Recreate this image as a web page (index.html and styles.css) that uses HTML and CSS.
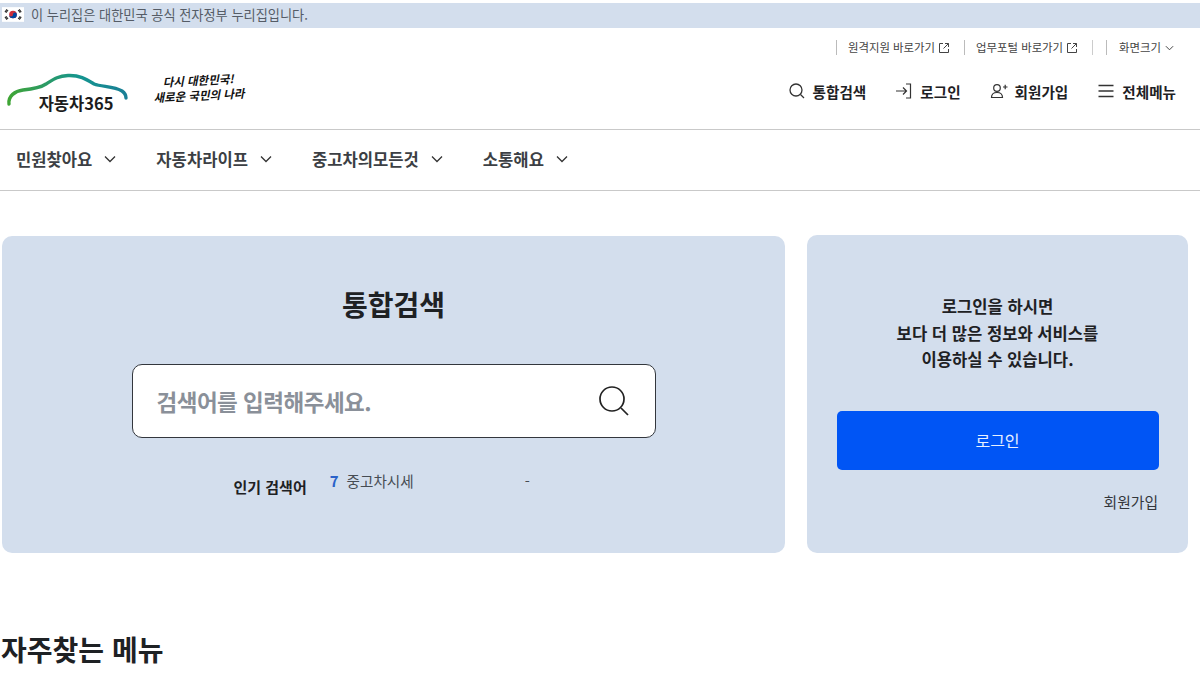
FILE: index.html
```html
<!DOCTYPE html>
<html lang="ko">
<head>
<meta charset="utf-8">
<title>자동차365</title>
<link rel="stylesheet" href="styles.css">
</head>
<body>
<div class="gov-banner">
  <svg class="flag" viewBox="0 0 24 16" width="22" height="15" aria-hidden="true">
    <rect width="24" height="16" fill="#fff"/>
    <circle cx="12" cy="8" r="4.2" fill="#cd2e3a"/>
    <path d="M7.8 8a4.2 4.2 0 0 0 8.4 0a2.1 2.1 0 0 0-4.2 0a2.1 2.1 0 0 1-4.2 0z" fill="#0047a0"/>
    <g stroke="#222" stroke-width="1.1">
      <path d="M3.2 5.4l2.2-3M4.4 6.1l2.2-3"/>
      <path d="M17.6 3.1l2.2 3M18.8 2.4l2.2 3"/>
      <path d="M3.2 10.6l2.2 3M4.4 9.9l2.2 3"/>
      <path d="M17.6 12.9l2.2-3M18.8 13.6l2.2-3"/>
    </g>
  </svg>
  <span>이 누리집은 대한민국 공식 전자정부 누리집입니다.</span>
</div>

<header class="site-header">
  <div class="util-row">
    <a class="util-link">원격지원 바로가기
      <svg class="ext" viewBox="0 0 12 12" width="12" height="12"><path d="M5 1.500H1.500v9h9V7M7 1.500h3.500V5M10.500 1.500L5.500 6.500" fill="none" stroke="#444" stroke-width="1"/></svg>
    </a>
    <a class="util-link">업무포털 바로가기
      <svg class="ext" viewBox="0 0 12 12" width="12" height="12"><path d="M5 1.500H1.500v9h9V7M7 1.500h3.500V5M10.500 1.500L5.500 6.500" fill="none" stroke="#444" stroke-width="1"/></svg>
    </a>
    <span class="util-sep"></span>
    <a class="util-link util-size">화면크기
      <svg viewBox="0 0 10 6" width="9" height="6"><path d="M1 1l4 4 4-4" fill="none" stroke="#444" stroke-width="1.100"/></svg>
    </a>
  </div>
  <div class="brand-row">
    <div class="brand">
      <div class="logo">
        <svg class="logo-car" viewBox="0 0 122 36" width="122" height="36" aria-hidden="true">
          <defs>
            <linearGradient id="carGrad" x1="0" x2="1" y1="0" y2="0">
              <stop offset="0" stop-color="#3fa535"/>
              <stop offset=".3" stop-color="#2d9b63"/>
              <stop offset=".6" stop-color="#14958f"/>
              <stop offset="1" stop-color="#1a7f96"/>
            </linearGradient>
          </defs>
          <path d="M3 34C2 26 9 21 17 20C27 19 34 18 40 14C48 9 52 6 62 5.500C74 5 80 9 88 14C96 17 108 16 116 21C119 23 120 25 120 28" fill="none" stroke="url(#carGrad)" stroke-width="3.400" stroke-linecap="round"/>
        </svg>
        <span class="logo-text">자동차365</span>
      </div>
      <div class="slogan"><span>다시 대한민국!</span><span>새로운 국민의 나라</span></div>
    </div>
    <nav class="top-actions">
      <a class="action">
        <svg viewBox="0 0 18 18" width="18" height="18"><circle cx="8" cy="8" r="6" fill="none" stroke="#333" stroke-width="1.300"/><path d="M12.500 12.500L16 16" stroke="#333" stroke-width="1.300"/></svg>
        통합검색</a>
      <a class="action">
        <svg viewBox="0 0 18 18" width="18" height="18"><path d="M1 9h10M8 5.500L11.500 9 8 12.500M11 2h4.500v14H11" fill="none" stroke="#333" stroke-width="1.200"/></svg>
        로그인</a>
      <a class="action">
        <svg viewBox="0 0 18 18" width="18" height="18"><circle cx="7" cy="6" r="3.300" fill="none" stroke="#333" stroke-width="1.200"/><path d="M1.500 15.500c0-3.500 2.500-5 5.500-5s5.500 1.500 5.500 5zM13 5h4.500M15.200 2.800v4.400" fill="none" stroke="#333" stroke-width="1.200"/></svg>
        회원가입</a>
      <a class="action">
        <svg viewBox="0 0 18 18" width="18" height="18"><path d="M1.500 3.500h15M1.500 9h15M1.500 14.500h15" fill="none" stroke="#333" stroke-width="1.300"/></svg>
        전체메뉴</a>
    </nav>
  </div>
</header>

<nav class="gnb">
  <a class="gnb-item">민원찾아요<svg viewBox="0 0 12 8" width="12" height="8"><path d="M1 1.500l5 5 5-5" fill="none" stroke="#333" stroke-width="1.300"/></svg></a>
  <a class="gnb-item">자동차라이프<svg viewBox="0 0 12 8" width="12" height="8"><path d="M1 1.500l5 5 5-5" fill="none" stroke="#333" stroke-width="1.300"/></svg></a>
  <a class="gnb-item">중고차의모든것<svg viewBox="0 0 12 8" width="12" height="8"><path d="M1 1.500l5 5 5-5" fill="none" stroke="#333" stroke-width="1.300"/></svg></a>
  <a class="gnb-item">소통해요<svg viewBox="0 0 12 8" width="12" height="8"><path d="M1 1.500l5 5 5-5" fill="none" stroke="#333" stroke-width="1.300"/></svg></a>
</nav>

<main class="main">
  <div class="cards">
    <section class="card search-card">
      <h1 class="search-title">통합검색</h1>
      <div class="search-box">
        <span class="placeholder">검색어를 입력해주세요.</span>
        <svg viewBox="0 0 32 32" width="32" height="32"><circle cx="14" cy="14" r="12" fill="none" stroke="#222" stroke-width="1.700"/><path d="M23 23l7 7" stroke="#222" stroke-width="1.700"/></svg>
      </div>
      <div class="popular">
        <strong class="popular-label">인기 검색어</strong>
        <span class="popular-rank">7</span>
        <span class="popular-word">중고차시세</span>
        <span class="popular-dash">-</span>
      </div>
    </section>
    <aside class="card login-card">
      <p class="login-msg">로그인을 하시면<br>보다 더 많은 정보와 서비스를<br>이용하실 수 있습니다.</p>
      <a class="login-btn">로그인</a>
      <a class="join-link">회원가입</a>
    </aside>
  </div>
  <h2 class="faq-title">자주찾는 메뉴</h2>
</main>
</body>
</html>
```

FILE: styles.css
```css
* { box-sizing: border-box; }
html, body { margin: 0; padding: 0; }
body {
  width: 1200px;
  height: 675px;
  overflow: hidden;
  padding-top: 3px;
  background: #fff;
  color: #1e2124;
  font-family: "Noto Sans CJK KR", "Noto Sans", sans-serif;
}
a { color: inherit; text-decoration: none; }

.gov-banner {
  height: 25px;
  background: #d3deed;
  display: flex;
  align-items: center;
  gap: 7px;
  padding: 0 0 2px 2px;
  font-size: 13.200px;
  color: #555c66;
}
.flag { flex: none; }

.site-header { height: 102px; border-bottom: 1px solid #c9c9c9; }

.util-row {
  height: 38px;
  padding: 12px 26px 0 0;
  display: flex;
  justify-content: flex-end;
  align-items: flex-start;
  font-size: 11.400px;
  color: #444;
}
.util-link {
  display: flex;
  align-items: center;
  gap: 3px;
  height: 15px;
  padding-left: 11px;
  margin-left: 14px;
  border-left: 1px solid #bbb;
  line-height: 15px;
}
.util-sep { width: 1px; height: 15px; background: #ccc; margin-left: 14px; }
.util-size { margin-left: 13px; gap: 4px; padding-left: 12px; }

.brand-row {
  height: 63px;
  display: flex;
  justify-content: space-between;
  align-items: flex-start;
  padding-right: 24px;
}
.brand { display: flex; padding: 4px 0 0 6px; }
.logo { width: 122px; height: 40px; display: flex; flex-direction: column; align-items: center; }
.logo-car { flex: none; }
.logo-text {
  margin-top: -13px;
  padding-left: 18px;
  font-size: 16.500px;
  font-weight: 700;
  color: #1c1c1c;
  line-height: 20px;
}
.slogan {
  margin: 3px 0 0 25px;
  align-self: flex-start;
  display: flex;
  flex-direction: column;
  align-items: center;
  font-size: 11.500px;
  line-height: 15px;
  font-weight: 700;
  font-style: italic;
  color: #111;
  white-space: nowrap;
  transform: rotate(-3deg);
}
.top-actions { display: flex; gap: 29px; padding-top: 14px; }
.action {
  display: flex;
  align-items: center;
  gap: 7px;
  height: 22px;
  font-size: 14.600px;
  font-weight: 700;
  color: #1e2124;
}

.gnb {
  height: 61px;
  border-bottom: 1px solid #c9c9c9;
  display: flex;
  align-items: center;
  padding: 0 0 2px 16px;
  gap: 40px;
}
.gnb-item {
  display: flex;
  align-items: center;
  gap: 12px;
  font-size: 16.600px;
  font-weight: 700;
  color: #3c3f44;
}

.main { padding: 44px 0 0 2px; }
.cards { display: flex; gap: 22px; align-items: flex-start; }
.card { background: #d3deed; border-radius: 10px; height: 318px; }
.search-card {
  width: 783px;
  margin-top: 1px;
  height: 317px;
  display: flex;
  flex-direction: column;
  align-items: center;
  padding-top: 47px;
}
.search-title {
  margin: 0;
  font-size: 28px;
  line-height: 42px;
  font-weight: 700;
  color: #1e2124;
}
.search-box {
  width: 524px;
  height: 74px;
  margin-top: 39px;
  background: #fff;
  border: 1px solid #33373d;
  border-radius: 10px;
  display: flex;
  align-items: center;
  justify-content: space-between;
  padding: 0 25px 0 24px;
}
.placeholder { font-size: 22.500px; font-weight: 700; color: #8a9099; letter-spacing: -.5px; }
.popular {
  width: 524px;
  height: 30px;
  margin-top: 32px;
  display: flex;
  align-items: flex-start;
  padding-left: 102px;
  font-size: 14.600px;
}
.popular-label { font-weight: 700; color: #1e2124; margin-top: 6px; font-size: 15px; }
.popular-rank { color: #2a62c9; font-weight: 700; margin-left: 23px; font-size: 15px; }
.popular-word { margin-left: 8px; color: #464c53; }
.popular-dash { margin-left: 111px; color: #464c53; }

.login-card {
  width: 381px;
  display: flex;
  flex-direction: column;
  align-items: center;
  padding: 58px 30px 0;
}
.login-msg {
  margin: 0;
  text-align: center;
  font-size: 16.600px;
  line-height: 26.500px;
  font-weight: 700;
  color: #1e2124;
}
.login-btn {
  width: 322px;
  height: 59px;
  margin-top: 38px;
  background: #0055f5;
  border-radius: 5px;
  color: #e8f0ff;
  font-size: 16px;
  display: flex;
  align-items: center;
  justify-content: center;
}
.join-link {
  align-self: flex-end;
  margin-top: 21px;
  font-size: 14.800px;
  line-height: 22px;
  color: #33363b;
}

.faq-title {
  margin: 76px 0 0 -1px;
  font-size: 28px;
  line-height: 40px;
  font-weight: 700;
  color: #1e2124;
}
```
